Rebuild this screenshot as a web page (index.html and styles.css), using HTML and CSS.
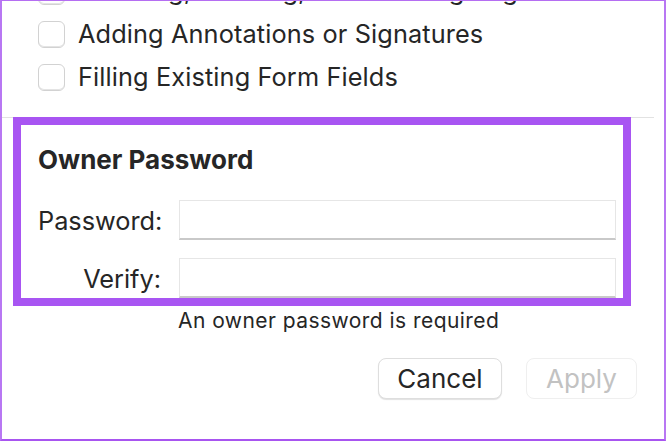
FILE: index.html
```html
<!DOCTYPE html>
<html lang="en">
<head>
<meta charset="utf-8">
<title>Owner Password</title>
<link rel="stylesheet" href="styles.css">
</head>
<body>
<div class="window">
  <ul class="perms">
    <li class="perm"><span class="box"></span><span class="perm-text">Inserting, Deleting, and Rotating Pages</span></li>
    <li class="perm"><span class="box"></span><span class="perm-text">Adding Annotations or Signatures</span></li>
    <li class="perm"><span class="box"></span><span class="perm-text">Filling Existing Form Fields</span></li>
  </ul>
  <div class="sep-wrap">
    <section class="owner">
      <h2 class="owner-title">Owner Password</h2>
      <div class="field">
        <label class="field-label">Password:</label>
        <span class="input"></span>
      </div>
      <div class="field">
        <label class="field-label">Verify:</label>
        <span class="input"></span>
      </div>
    </section>
  </div>
  <p class="hint">An owner password is required</p>
  <div class="buttons">
    <button class="btn">Cancel</button>
    <button class="btn btn-disabled">Apply</button>
  </div>
</div>
</body>
</html>
```
FILE: styles.css
```css
html, body {
  margin: 0;
  padding: 0;
  background: #ffffff;
}
body {
  font-family: Inter, "Liberation Sans", sans-serif;
  color: #262626;
  overflow: hidden;
}
.window {
  position: relative;
  width: 666px;
  height: 441px;
  box-sizing: border-box;
  border-top: 1px solid #b56ef2;
  border-left: 2px solid #b877f3;
  border-right: 2px solid #b877f3;
  border-bottom: 2px solid #a855f0;
  background: #ffffff;
  overflow: hidden;
}
.perms {
  list-style: none;
  margin: -23px 0 0 0;
  padding: 0 0 0 36px;
}
.perm {
  display: flex;
  align-items: flex-start;
  height: 43px;
  gap: 13px;
}
.box {
  flex: none;
  width: 25px;
  height: 25px;
  border: 1px solid #d2d2d2;
  border-radius: 6px;
  box-shadow: inset 0 -1px 0 #e4e4e4;
  background: #fff;
}
.perm-text {
  font-size: 25.3px;
  line-height: 26px;
  letter-spacing: 0.12px;
}
.sep-wrap {
  margin-top: 10px;
  border-top: 1px solid #e2e2e2;
  margin-right: 10px;
}
.owner {
  margin: -1px 0 0 11px;
  width: 618px;
  box-sizing: border-box;
  border: 8px solid #a855f2;
  padding: 20px 7px 0 17px;
}
.owner-title {
  margin: 0 0 25px 0;
  font-size: 26px;
  line-height: 30px;
  font-weight: 700;
}
.field {
  display: flex;
  align-items: center;
  gap: 18px;
  margin-bottom: 18px;
}
.field:last-child {
  margin-bottom: 0;
}
.field-label {
  width: 123px;
  text-align: right;
  font-size: 25.3px;
  flex: none;
}
.input {
  flex: 1;
  height: 40px;
  box-sizing: border-box;
  border: 1px solid #e6e6e6;
  border-bottom: 2px solid #c9c9c9;
  background: #fff;
}
.hint {
  margin: 3px 0 0 176px;
  font-size: 21px;
  line-height: 24px;
  letter-spacing: 0.45px;
}
.buttons {
  display: flex;
  justify-content: flex-end;
  gap: 24px;
  margin: 25px 27px 0 0;
}
.btn {
  height: 41px;
  box-sizing: border-box;
  border: 1px solid #dedede;
  border-radius: 8px;
  background: #fff;
  box-shadow: 0 1px 1px rgba(0,0,0,0.12);
  font-family: Inter, "Liberation Sans", sans-serif;
  font-size: 26px;
  color: #262626;
  padding: 0;
  width: 124px;
}
.btn-disabled {
  width: 111px;
  color: #c2c2c2;
  border-color: #efefef;
  box-shadow: none;
}
```
